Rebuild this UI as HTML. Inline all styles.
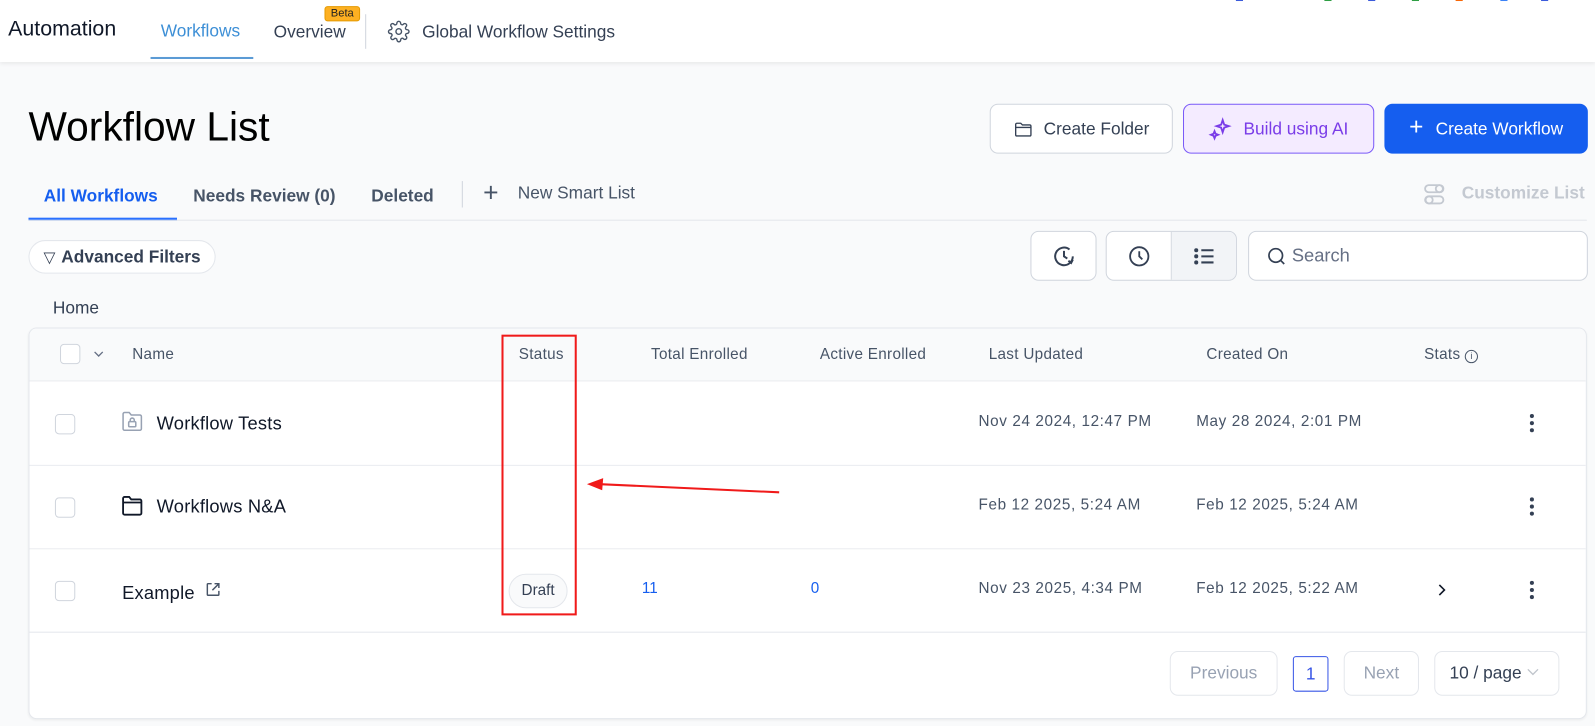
<!DOCTYPE html>
<html><head><meta charset="utf-8"><style>
*{box-sizing:border-box;margin:0;padding:0}
html,body{width:1595px;height:726px;overflow:hidden;background:#f9fafb}
#w{position:absolute;left:0;top:0;width:1568px;height:714px;transform:scale(1.0172);transform-origin:0 0;font-family:"Liberation Sans",sans-serif;color:#101828}
.a{position:absolute;white-space:nowrap}
.hdr{position:absolute;left:0;top:0;width:1568px;height:61px;background:#fff;box-shadow:0 2px 4px rgba(0,0,0,.08)}
.btn{position:absolute;border:1px solid #d0d5dd;border-radius:8px;background:#fff;display:flex;align-items:center;justify-content:center;font-size:17px}
.card{position:absolute;left:28px;top:322px;width:1532px;height:385px;background:#fff;border:1px solid #e4e7ec;border-radius:8px;overflow:hidden;box-shadow:0 1px 2px rgba(0,0,0,.05)}
.th{font-size:15px;color:#475467;letter-spacing:.3px}
.cb{position:absolute;width:20px;height:20px;border:1px solid #d0d5dd;border-radius:4px;background:#fff}
.td{font-size:15px;color:#475467;letter-spacing:.6px}
.nm{font-size:18px;letter-spacing:.2px}
.dots{position:absolute;width:4px}
.dots i{display:block;width:4px;height:4px;border-radius:2px;background:#344054;margin-bottom:3px}
</style></head><body><div id="w">
<div class="hdr"></div>
<div class="a" style="left:8px;top:17px;font-size:21px;color:#101828">Automation</div>
<div class="a" style="left:158px;top:21px;font-size:17px;color:#3d8fd6">Workflows</div>
<div class="a" style="left:148px;top:56px;width:101px;height:2px;background:#5b9bd5"></div>
<div class="a" style="left:269px;top:22px;font-size:17px;color:#344054">Overview</div>
<div class="a" style="left:319px;top:6px;width:35px;height:15px;background:#fdb022;border:1px solid #e59a00;border-radius:3px;font-size:11px;text-align:center;line-height:13px;color:#222">Beta</div>
<div class="a" style="left:359px;top:14px;width:1px;height:34px;background:#d0d5dd"></div>
<svg class="a" style="left:381px;top:20px" width="22" height="22" viewBox="0 0 24 24" fill="none" stroke="#475467" stroke-width="1.5"><circle cx="12" cy="12" r="3"/><path d="M19.4 15a1.7 1.7 0 0 0 .3 1.8l.1.1a2 2 0 1 1-2.8 2.8l-.1-.1a1.7 1.7 0 0 0-1.8-.3 1.7 1.7 0 0 0-1 1.5V21a2 2 0 1 1-4 0v-.1a1.7 1.7 0 0 0-1.1-1.5 1.7 1.7 0 0 0-1.800.3l-.1.1a2 2 0 1 1-2.8-2.8l.1-.1a1.7 1.7 0 0 0 .3-1.8 1.7 1.7 0 0 0-1.5-1H3a2 2 0 1 1 0-4h.1a1.7 1.7 0 0 0 1.5-1.1 1.7 1.7 0 0 0-.3-1.8l-.1-.1a2 2 0 1 1 2.8-2.8l.1.1a1.7 1.7 0 0 0 1.8.3H9a1.7 1.7 0 0 0 1-1.5V3a2 2 0 1 1 4 0v.1a1.7 1.7 0 0 0 1 1.5 1.7 1.7 0 0 0 1.8-.3l.1-.1a2 2 0 1 1 2.8 2.8l-.1.1a1.7 1.7 0 0 0-.3 1.8V9a1.7 1.7 0 0 0 1.5 1H21a2 2 0 1 1 0 4h-.1a1.7 1.7 0 0 0-1.5 1z"/></svg>
<div class="a" style="left:415px;top:22px;font-size:17px;color:#344054">Global Workflow Settings</div>
<div class="a" style="left:1218px;top:-3px;width:1px;height:1px;box-shadow:0 0 0 3px #3b5bdb,87px 0 0 3px #2f9e44,130px 0 0 3px #3b5bdb,173px 0 0 3px #2f9e44,216px 0 0 3px #f76707,260px 0 0 3px #3b82f6,300px 0 0 3px #3b5bdb"></div>

<div class="a" style="left:28px;top:103px;font-size:40px;color:#000">Workflow List</div>
<div class="btn" style="left:973px;top:102px;width:180px;height:49px;color:#344054"><svg width="20" height="20" viewBox="0 0 24 24" fill="none" stroke="#344054" stroke-width="1.6" style="margin-right:10px"><path d="M3 6.5A1.5 1.5 0 0 1 4.5 5H9l2 2h8.5A1.5 1.5 0 0 1 21 8.5v10a1.5 1.5 0 0 1-1.5 1.5h-15A1.5 1.5 0 0 1 3 18.5z"/><path d="M3 10h18"/></svg>Create Folder</div>
<div class="btn" style="left:1163px;top:102px;width:188px;height:49px;background:#f4ebff;border-color:#7a5af8;color:#7a3ce8"><svg width="24" height="24" viewBox="0 0 24 24" fill="none" stroke="#7a3ce8" stroke-width="1.8" style="margin-right:10px"><path d="M14 3l1.5 4.5L20 9l-4.5 1.5L14 15l-1.5-4.5L8 9l4.5-1.5z"/><path d="M6 14l1 2.5L9.5 17.5 7 18.5 6 21l-1-2.5L2.5 17.5 5 16.5z"/></svg>Build using AI</div>
<div class="btn" style="left:1361px;top:102px;width:200px;height:49px;background:#155eef;border-color:#155eef;color:#fff"><span style="font-size:24px;font-weight:300;margin-right:12px;margin-top:-3px">+</span>Create Workflow</div>

<div class="a" style="left:43px;top:183px;font-size:17px;color:#155eef;font-weight:bold">All Workflows</div>
<div class="a" style="left:28px;top:214px;width:146px;height:3px;background:#2970ff"></div>
<div class="a" style="left:190px;top:183px;font-size:17px;color:#475467;font-weight:bold">Needs Review (0)</div>
<div class="a" style="left:365px;top:183px;font-size:17px;color:#475467;font-weight:bold">Deleted</div>
<div class="a" style="left:454px;top:178px;width:1px;height:26px;background:#d0d5dd"></div>
<div class="a" style="left:475px;top:174px;font-size:26px;font-weight:300;color:#475467">+</div>
<div class="a" style="left:509px;top:180px;font-size:17px;color:#475467">New Smart List</div>
<svg class="a" style="left:1398px;top:179px" width="24" height="24" viewBox="0 0 24 24" fill="none" stroke="#c4c9d1" stroke-width="1.8"><rect x="3" y="3" width="18" height="7" rx="3.5"/><rect x="3" y="14" width="18" height="7" rx="3.5"/><circle cx="17" cy="6.5" r="3.5"/><circle cx="7" cy="17.5" r="3.5"/></svg>
<div class="a" style="left:1437px;top:180px;font-size:17px;color:#c4c9d1;font-weight:bold">Customize List</div>
<div class="a" style="left:28px;top:216px;width:1532px;height:1px;background:#e4e7ec"></div>

<div class="btn" style="left:28px;top:236px;width:184px;height:33px;border-radius:17px;border-color:#e4e7ec;font-weight:bold;color:#344054"><span style="font-size:15px;font-weight:normal;margin-right:6px">▽</span>Advanced Filters</div>
<div class="btn" style="left:1013px;top:227px;width:65px;height:49px"><svg width="26" height="26" viewBox="0 0 24 24" fill="none" stroke="#344054" stroke-width="1.8"><path d="M20 12a8 8 0 1 1-3-6.2"/><path d="M12 7v5l3 2"/><path d="M20 15l-1.5 3-2.5-2"/></svg></div>
<div class="btn" style="left:1087px;top:227px;width:129px;height:49px;overflow:hidden;justify-content:flex-start"><div style="width:64px;height:100%;display:flex;align-items:center;justify-content:center;border-right:1px solid #d0d5dd"><svg width="24" height="24" viewBox="0 0 24 24" fill="none" stroke="#344054" stroke-width="1.8"><circle cx="12" cy="12" r="9"/><path d="M12 7v5l3 3"/></svg></div><div style="flex:1;height:100%;background:#f2f4f7;display:flex;align-items:center;justify-content:center"><svg width="24" height="24" viewBox="0 0 24 24" fill="none" stroke="#344054" stroke-width="2"><path d="M9 6h12M9 12h12M9 18h12"/><circle cx="4" cy="6" r="1" fill="#344054"/><circle cx="4" cy="12" r="1" fill="#344054"/><circle cx="4" cy="18" r="1" fill="#344054"/></svg></div></div>
<div class="btn" style="left:1227px;top:227px;width:334px;height:49px;justify-content:flex-start;padding-left:17px;color:#667085;font-size:18px"><svg width="20" height="20" viewBox="0 0 24 24" fill="none" stroke="#344054" stroke-width="2" style="margin-right:5px"><circle cx="11" cy="11" r="8"/><path d="M17 17l4 4"/></svg>Search</div>

<div class="a" style="left:52px;top:293px;font-size:17px;color:#344054">Home</div>

<div class="card">
 <div style="position:absolute;left:0;top:0;width:100%;height:52px;background:#f9fafb;border-bottom:1px solid #eaecf0"></div>
 <div class="cb" style="left:30px;top:15px"></div>
 <svg class="a" style="left:62px;top:20px" width="12" height="10" viewBox="0 0 12 10" fill="none" stroke="#667085" stroke-width="1.3"><path d="M2 3l4 4 4-4"/></svg>
 <div class="a th" style="left:101px;top:17px">Name</div>
 <div class="a th" style="left:481px;top:17px">Status</div>
 <div class="a th" style="left:611px;top:17px">Total Enrolled</div>
 <div class="a th" style="left:777px;top:17px">Active Enrolled</div>
 <div class="a th" style="left:943px;top:17px">Last Updated</div>
 <div class="a th" style="left:1157px;top:17px">Created On</div>
 <div class="a th" style="left:1371px;top:17px">Stats <span style="display:inline-block;width:13px;height:13px;border:1.3px solid #475467;border-radius:50%;font-size:9px;text-align:center;line-height:11px;vertical-align:0">i</span></div>

 <div style="position:absolute;left:0;top:134px;width:100%;height:1px;background:#eaecf0"></div>
 <div style="position:absolute;left:0;top:216px;width:100%;height:1px;background:#eaecf0"></div>
 <div style="position:absolute;left:0;top:298px;width:100%;height:1px;background:#e4e7ec"></div>

 <div class="cb" style="left:25px;top:84px"></div>
 <svg class="a" style="left:90px;top:80px" width="22" height="22" viewBox="0 0 22 22" fill="none" stroke="#98a2b3" stroke-width="1.5"><path d="M2 4a1.5 1.5 0 0 1 1.5-1.5H8l2 2.5h8.5A1.5 1.5 0 0 1 20 6.5v12A1.5 1.5 0 0 1 18.5 20h-15A1.5 1.5 0 0 1 2 18.5z"/><rect x="7.5" y="11.5" width="7" height="5" rx="1"/><path d="M9 11.5V10a2 2 0 0 1 4 0v1.5"/></svg>
 <div class="a nm" style="left:125px;top:83px">Workflow Tests</div>
 <div class="a td" style="left:933px;top:83px">Nov 24 2024, 12:47 PM</div>
 <div class="a td" style="left:1147px;top:83px">May 28 2024, 2:01 PM</div>
 <div class="dots" style="left:1475px;top:84px"><i></i><i></i><i></i></div>

 <div class="cb" style="left:25px;top:166px"></div>
 <svg class="a" style="left:90px;top:163px" width="22" height="22" viewBox="0 0 22 22" fill="none" stroke="#101828" stroke-width="1.8"><path d="M2 4a1.5 1.5 0 0 1 1.5-1.5H8l2 2.5h8.5A1.5 1.5 0 0 1 20 6.5v12A1.5 1.5 0 0 1 18.5 20h-15A1.5 1.5 0 0 1 2 18.5z"/><path d="M2 8h18"/></svg>
 <div class="a nm" style="left:125px;top:165px">Workflows N&amp;A</div>
 <div class="a td" style="left:933px;top:165px">Feb 12 2025, 5:24 AM</div>
 <div class="a td" style="left:1147px;top:165px">Feb 12 2025, 5:24 AM</div>
 <div class="dots" style="left:1475px;top:166px"><i></i><i></i><i></i></div>

 <div class="cb" style="left:25px;top:248px"></div>
 <div class="a nm" style="left:91px;top:250px">Example</div>
 <svg class="a" style="left:172px;top:248px" width="17" height="17" viewBox="0 0 24 24" fill="none" stroke="#475467" stroke-width="2"><path d="M10 4H5a1 1 0 0 0-1 1v14a1 1 0 0 0 1 1h14a1 1 0 0 0 1-1v-5"/><path d="M14 4h6v6M20 4l-9 9"/></svg>
 <div class="a" style="left:471px;top:241px;width:58px;height:34px;border:1px solid #e4e7ec;border-radius:17px;background:#f9fafb;font-size:15px;text-align:center;line-height:32px;color:#344054">Draft</div>
 <div class="a" style="left:602px;top:247px;font-size:15px;color:#155eef">11</div>
 <div class="a" style="left:768px;top:247px;font-size:15px;color:#155eef">0</div>
 <div class="a td" style="left:933px;top:247px">Nov 23 2025, 4:34 PM</div>
 <div class="a td" style="left:1147px;top:247px">Feb 12 2025, 5:22 AM</div>
 <svg class="a" style="left:1383px;top:250px" width="10" height="14" viewBox="0 0 10 14" fill="none" stroke="#101828" stroke-width="1.6"><path d="M3 2l5 5-5 5"/></svg>
 <div class="dots" style="left:1475px;top:248px"><i></i><i></i><i></i></div>

 <div class="a" style="left:1121px;top:317px;width:106px;height:44px;border:1px solid #e4e7ec;border-radius:8px;font-size:17px;color:#98a2b3;text-align:center;line-height:42px">Previous</div>
 <div class="a" style="left:1242px;top:322px;width:35px;height:35px;border:1px solid #3755e6;border-radius:3px;font-size:17px;color:#3755e6;text-align:center;line-height:33px">1</div>
 <div class="a" style="left:1292px;top:317px;width:74px;height:44px;border:1px solid #e4e7ec;border-radius:8px;font-size:17px;color:#98a2b3;text-align:center;line-height:42px">Next</div>
 <div class="a" style="left:1381px;top:317px;width:123px;height:44px;border:1px solid #e4e7ec;border-radius:8px;font-size:17px;color:#344054;padding-left:14px;line-height:42px">10 / page <svg width="12" height="8" viewBox="0 0 12 8" fill="none" stroke="#c0c5cc" stroke-width="1.3" style="vertical-align:2px"><path d="M1 1l5 5 5-5"/></svg></div>
</div>

<div class="a" style="left:493px;top:329px;width:74px;height:276px;border:2px solid #f01a1a"></div>
<svg class="a" style="left:570px;top:465px" width="200" height="25" viewBox="570 465 200 25"><path d="M766 484L590 476" stroke="#f01a1a" stroke-width="2"/><path d="M577 476L593 470L592 482z" fill="#f01a1a"/></svg>
</div></body></html>
